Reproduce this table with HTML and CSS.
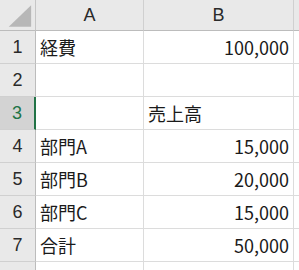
FILE: index.html
```html
<!DOCTYPE html>
<html lang="ja">
<head>
<meta charset="utf-8">
<link rel="stylesheet" href="styles.css">
</head>
<body>
<div class="sheet">
  <div class="corner"><svg class="tri" width="36" height="31" viewBox="0 0 36 31"><polygon points="9,27 32,27 32,5" fill="#b7b7b7"/></svg></div>
  <div class="ch">A</div>
  <div class="ch">B</div>
  <div class="ch last"></div>

  <div class="rh">1</div><div class="cell">経費</div><div class="cell num">100,000</div><div class="cell last"></div>
  <div class="rh">2</div><div class="cell"></div><div class="cell"></div><div class="cell last"></div>
  <div class="rh active">3</div><div class="cell"></div><div class="cell">売上高</div><div class="cell last"></div>
  <div class="rh">4</div><div class="cell">部門A</div><div class="cell num">15,000</div><div class="cell last"></div>
  <div class="rh">5</div><div class="cell">部門B</div><div class="cell num">20,000</div><div class="cell last"></div>
  <div class="rh">6</div><div class="cell">部門C</div><div class="cell num">15,000</div><div class="cell last"></div>
  <div class="rh">7</div><div class="cell">合計</div><div class="cell num">50,000</div><div class="cell last"></div>
  <div class="rh"></div><div class="cell"></div><div class="cell"></div><div class="cell last"></div>
</div>
</body>
</html>
```

FILE: styles.css
```css
html, body {
  margin: 0;
  padding: 0;
  background: #ffffff;
}
body {
  width: 299px;
  height: 270px;
  overflow: hidden;
  font-family: "Noto Sans CJK JP", "Noto Sans", sans-serif;
  color: #1f1f1f;
}
.sheet {
  display: grid;
  grid-template-columns: 36px 108px 150px 1fr;
  grid-template-rows: 31px;
  grid-auto-rows: 33px;
  height: 270px;
  overflow: hidden;
}
.sheet > div {
  box-sizing: border-box;
  display: flex;
  align-items: center;
  font-size: 18px;
  line-height: 1;
}
.corner {
  background: #e9e9e9;
  border-right: 1px solid #c6c6c6;
  border-bottom: 1px solid #bcbcbc;
}
.tri {
  display: block;
}
.ch {
  background: #e9e9e9;
  border-right: 1px solid #d0d0d0;
  border-bottom: 1px solid #bcbcbc;
  justify-content: center;
  color: #2a2a2a;
  font-family: "Liberation Sans", "Noto Sans", sans-serif;
}
.rh {
  background: #e9e9e9;
  border-right: 1px solid #bcbcbc;
  border-bottom: 1px solid #d0d0d0;
  justify-content: center;
  color: #2a2a2a;
  font-family: "Liberation Sans", "Noto Sans", sans-serif;
}
.rh.active {
  background: #d3d3d3;
  color: #217346;
  border-right: 2px solid #217346;
}
.cell {
  border-right: 1px solid #dcdcdc;
  border-bottom: 1px solid #dcdcdc;
  padding: 0 4px 0 4px;
  white-space: nowrap;
  overflow: visible;
  color: #1a1a1a;
}
.num {
  justify-content: flex-end;
}
```
